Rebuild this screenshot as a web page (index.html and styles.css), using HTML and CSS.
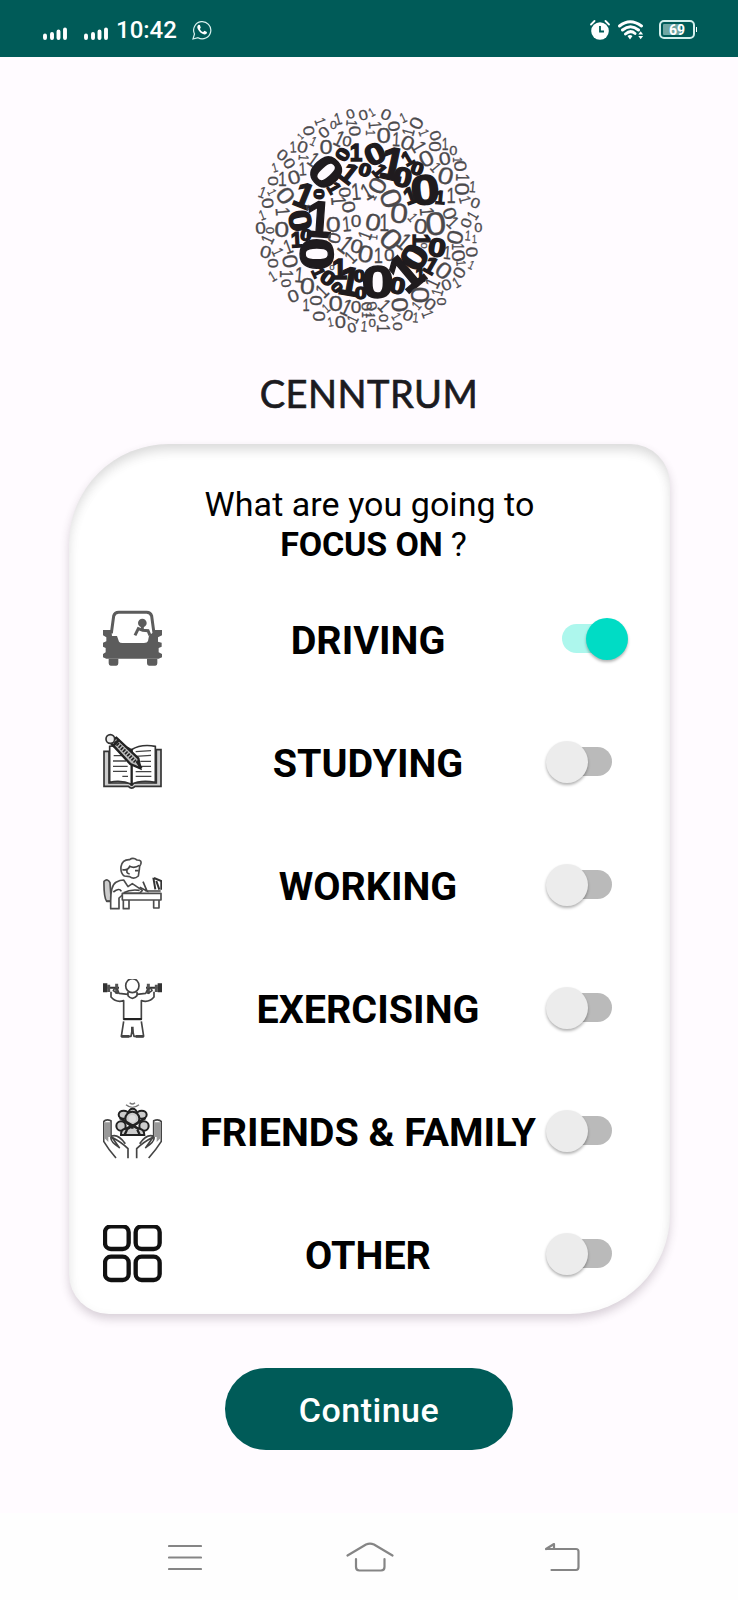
FILE: index.html
```html
<!DOCTYPE html>
<html lang="en">
<head>
<meta charset="utf-8">
<title>Cenntrum</title>
<link rel="stylesheet" href="styles.css">
</head>
<body>
<header class="status">
  <svg class="signal" viewBox="0 0 67 13" width="67" height="13"><path d="M2 8.500v2.500M9 7v4M15.500 4.500v6.500M22 2.500v8.500M43 8.500v2.500M50 7v4M56.500 4.500v6.500M63 2.500v8.500" fill="none" stroke="#fff" stroke-width="3.900" stroke-linecap="round"/></svg>
  <span class="clock">10:42</span>
  <svg class="chat" viewBox="0 0 20 20" width="20" height="20"><path d="M1 19l1.500-5A8.600 8.600 0 1 1 6 17.700z" fill="none" stroke="#d9f2ef" stroke-width="1.200"/><path d="M6.700 4.800c-1.500.8-1.800 2.500-.9 4.300 1.400 3 4 5 6.600 5.300 1.800 0 2.800-1.200 2.500-2.400l-2.400-1.200-1.300 1.300c-1.500-.6-2.700-1.800-3.300-3.200l.9-1.200-.9-2.600z" fill="#fff"/></svg>
  <span class="spacer"></span>
  <svg class="alarm" viewBox="0 0 20 20" width="20" height="20"><circle cx="10" cy="11" r="8.800" fill="#fff"/><path d="M1 4.500L4.500 1M19 4.500L15.500 1" stroke="#fff" stroke-width="1.800" stroke-linecap="round"/><path d="M10 6v5.500h4" fill="none" stroke="#005b58" stroke-width="1.800"/></svg>
  <svg class="wifi" viewBox="0 0 26 20" width="26" height="20"><path d="M1.500 6Q12 -2.500 23.500 6M4.500 10Q12.500 3.500 20.500 10M7.500 14Q12.500 9.500 17 13.500" fill="none" stroke="#fff" stroke-width="2.900" stroke-linecap="round"/><path d="M9.500 16Q12 14 14.500 16L12 19.500zM20.300 14.500l2.400-3.200 2.400 3.200zM20.300 16l2.400 3.200 2.400-3.200z" fill="#fff"/></svg>
  <span class="battery">69</span>
</header>

<main class="screen">
  <svg class="logo" id="logo" viewBox="0 0 717 717" width="239" height="239"></svg>
  <h1 class="brand">CENNTRUM</h1>

  <section class="card">
    <p class="question">What are you going to<br><span class="second"><b>FOCUS ON</b> ?</span></p>
    <div class="rows">
      <div class="row">
        <svg class="icon soft" viewBox="0 2 177 177"><path d="M25 72L32 20Q35 9 47 9H131Q143 9 146 20L153 72" fill="none" stroke="#5c5c5c" stroke-width="9"/><path d="M0 62h25l2 18h15l6 17q3 4 10 4h65q10 0 12-6l3-16 10-8h5l2-9h22v16l-12 6v13l11 3v12l-9 4v13l10 5v10l-10 4H10l-10-4v-10l8-5v-13l-8-4v-12l10-4V84L0 78z" fill="#5c5c5c"/><path d="M17 148h29v14q0 7-6 7H23q-6 0-6-7zM132 148h31v14q0 7-6 7h-19q-6 0-6-7z" fill="#5c5c5c"/><circle cx="118" cy="41" r="13" fill="#5c5c5c"/><path d="M118 48v15M96 78l10-20 13 5 16 1 6 14" fill="none" stroke="#5c5c5c" stroke-width="9"/></svg>
        <span class="label">DRIVING</span><span class="switch on"></span>
      </div>
      <div class="row">
        <svg class="icon soft" viewBox="0 0 177 177"><path d="M3 55H18V150H80Q86 163 92 150H160V50H174V160H96Q86 170 76 160H3z" fill="#ccc" stroke="#333" stroke-width="5"/><path d="M20 40Q60 32 85 50Q115 32 157 40V148Q112 140 86 154Q55 140 20 148z" fill="#fff" stroke="#333" stroke-width="5"/><path d="M86 48V158" stroke="#222" stroke-width="7"/><path d="M32 68h25M30 84h39M30 100h44M30 115h42M58 130h17M98 56l46-3M98 70l46-3M112 85h32M113 100h31M98 116h47M98 130h47" stroke="#444" stroke-width="4"/><path d="M20 26L40 14 106 76 112 106 82 93z" fill="#bbb" stroke="#222" stroke-width="7"/><path d="M36 26L97 86" stroke="#222" stroke-width="11" stroke-dasharray="5 4"/><path d="M28 41L49 20M101 84L115 106" stroke="#222" stroke-width="8"/><circle cx="22" cy="18" r="13" fill="#eee" stroke="#333" stroke-width="5"/></svg>
        <span class="label">STUDYING</span><span class="switch"></span>
      </div>
      <div class="row">
        <svg class="icon soft" viewBox="0 0 177 177"><g fill="#fff" stroke="#4c4c4c" stroke-width="5" stroke-linejoin="round"><path d="M3 76Q14 66 21 80L25 136H11Q2 124 3 76z" fill="#ccc"/><path d="M23 135Q23 88 39 79Q51 72 62 72L75 92L88 83L118 103L110 112H74L65 111L48 126V158H23V135H9"/><path d="M58 112H174V132H58zM61 132H78V158H61zM152 132H168V156H152z"/><path d="M64 60Q52 52 54 32Q58 10 80 11Q90 3 102 12Q118 12 113 25Q109 30 109 40L106 60Q93 72 80 62L64 60z"/></g><path d="M58 41Q75 44 80 31Q95 38 109 28M73 42Q68 52 80 54M96 44H107M62 110Q82 99 110 103M110 94L132 105L120 77M127 105H173" fill="none" stroke="#444" stroke-width="5"/><path d="M151 65L157 100M153 66L175 75V101M160 75L169 101" fill="none" stroke="#333" stroke-width="6"/><path d="M31 108Q49 94 55 106" fill="none" stroke="#444" stroke-width="5"/></svg>
        <span class="label">WORKING</span><span class="switch"></span>
      </div>
      <div class="row">
        <svg class="icon soft" viewBox="0 0 177 177"><path d="M0 13h13v27H0zM164 13h13v27h-13z" fill="#333"/><path d="M13 26H48M129 26H164" stroke="#333" stroke-width="6"/><path d="M17 17v22M41 14v30M136 14v30M160 17v22" stroke="#555" stroke-width="9"/><g fill="none" stroke="#444" stroke-width="5" stroke-linejoin="round"><ellipse cx="88" cy="20" rx="20" ry="21"/><path d="M75 39V50Q88 66 102 50V39M75 46L48 43L43 31Q34 24 31 35L44 44M102 46L128 43L134 31Q145 24 147 35L134 44M24 38V54Q40 72 62 65V121H115V65Q138 72 153 54V38M62 127L55 172H84L88 150L93 172H122L115 127"/></g><path d="M62 120H116" stroke="#222" stroke-width="6"/><path d="M88 143V160M55 172H79M98 172H122" stroke="#444" stroke-width="8"/></svg>
        <span class="label">EXERCISING</span><span class="switch"></span>
      </div>
      <div class="row">
        <svg class="icon soft" viewBox="0 0 177 177"><g stroke="#444" stroke-width="5" stroke-linejoin="round"><path d="M1 60Q8 50 24 56V104Q57 121 75 140V169M2 58V118Q16 142 39 168M26 104L49 137Q18 117 25 103Q44 94 67 125M176 60Q168 50 152 56V104Q119 121 101 140V169M175 58V118Q160 142 137 168M151 104L128 137Q159 117 152 103Q132 94 110 125" fill="none"/><path d="M4 61h18v44h-6v15L4 108zM155 61h18v47l-12 12v-15h-6z" fill="#999" stroke="none"/></g><g fill="#ccc" stroke="#222" stroke-width="6"><ellipse cx="62" cy="38" rx="15" ry="12"/><ellipse cx="116" cy="38" rx="15" ry="12"/><circle cx="54" cy="72" r="14"/><circle cx="123" cy="72" r="14"/><circle cx="89" cy="32" r="12"/><circle cx="88" cy="50" r="21"/><path d="M54 99Q53 82 67 80L88 71L109 80Q124 82 124 99z"/></g><path d="M50 48L108 82M128 48L68 84M65 98L72 83M103 83L111 100M88 66V80" stroke="#222" stroke-width="7"/><circle cx="88" cy="50" r="11" fill="#ddd"/><path d="M69 8Q88 24 108 8M80 2Q88 10 96 2" stroke="#777" stroke-width="4" fill="none"/></svg>
        <span class="label">FRIENDS &amp; FAMILY</span><span class="switch"></span>
      </div>
      <div class="row">
        <svg class="icon soft" viewBox="0 2 177 177"><g fill="none" stroke="#111" stroke-width="13"><rect x="6" y="6" width="71" height="68" rx="18"/><rect x="98" y="6" width="72" height="68" rx="18"/><rect x="6" y="97" width="71" height="70" rx="18"/><rect x="98" y="97" width="72" height="70" rx="18"/></g></svg>
        <span class="label">OTHER</span><span class="switch"></span>
      </div>
    </div>
  </section>

  <button class="continue">Continue</button>
</main>

<nav class="nav">
  <svg viewBox="0 0 34 27" width="34" height="27"><path d="M1 2H33M1 13.500H33M1 25H33" class="stroke"/></svg>
  <svg viewBox="0 0 48 31" width="48" height="31"><path d="M1.500 13.500L20 2.500Q24 .8 28 2.500L46.500 13.500M10 17V25Q10 28.500 13.500 28.500H35Q38.500 28.500 38.500 25V17" class="stroke"/></svg>
  <svg viewBox="0 0 35 29" width="35" height="29"><path d="M1 6L9 1V6M1 6H31Q33.500 6 33.500 8.500V24Q33.500 27 31 27H6.500" class="stroke"/></svg>
</nav>
<script src="logo.js"></script>
</body>
</html>
```
FILE: styles.css
```css
* { box-sizing: border-box; }
body {
  margin: 0;
  width: 738px;
  height: 1600px;
  display: flex;
  flex-direction: column;
  background: #fffbff;
  font-family: Roboto, "Liberation Sans", sans-serif;
  color: #000;
}
.status {
  height: 57px;
  flex: none;
  display: flex;
  align-items: center;
  padding: 2px 43px 0 43px;
  background: #005b58;
  color: #fff;
}
.signal { margin-top: 7px; }
.clock { margin-left: 6px; font-size: 24px; font-weight: 500; line-height: 28px; width: 60px; white-space: nowrap; }
.chat { margin-left: 16px; }
.spacer { flex: 1; }
.wifi { margin: 1px 15px 0 8px; }
.battery {
  position: relative;
  width: 36px;
  height: 19px;
  border: 2px solid #d4efec;
  border-radius: 5px;
  background: linear-gradient(90deg, #6fa6a2 65%, #005b58 65%) content-box;
  padding: 2px;
  font-size: 14px;
  font-weight: 700;
  line-height: 12px;
  text-align: center;
}
.battery::after {
  content: "";
  position: absolute;
  right: -4px;
  top: 5px;
  width: 1px;
  height: 5px;
  background: #fff;
}
.screen { display: flex; flex-direction: column; align-items: center; flex: 1; }
.logo { margin-top: 43px; display: block; }
.logo text {
  font-family: "Liberation Sans", sans-serif;
  text-anchor: middle;
  fill: #4b494c;
  stroke: #4b494c;
  stroke-width: .8px;
}
.logo .heavy { fill: #1f1b1e; stroke: #1f1b1e; stroke-width: 4px; }
.brand {
  margin: 30px 0 0;
  height: 48px;
  font: 400 38px/48px Lato, sans-serif;
  letter-spacing: .5px;
  color: #1c1b1f;
  -webkit-text-stroke: .7px #1c1b1f;
}
.card {
  width: 601px;
  height: 870px;
  margin-top: 27px;
  margin-left: 1px;
  padding-top: 40px;
  border-radius: 100px 40px 100px 40px;
  background: #fff;
  box-shadow: 0 5px 10px rgba(60, 40, 60, .2), inset 0 9px 14px -4px rgba(0, 0, 0, .09), inset 0 5px 12px rgba(0, 0, 0, .08);
}
.question { margin: 0 0 16px; font-size: 34px; line-height: 40px; letter-spacing: .05px; text-align: center; }
.second { padding-left: 8px; letter-spacing: -.15px; }
.rows { display: flex; flex-direction: column; gap: 5px; }
.row {
  height: 118px;
  display: grid;
  grid-template-columns: 59px 1fr 82px;
  align-items: center;
  padding: 0 42px 0 34px;
}
.icon { width: 59px; height: 59px; overflow: hidden; }
.soft { filter: blur(.5px); }
.label { margin-left: 28px; padding-top: 2px; text-align: center; font-size: 39.5px; font-weight: 700; white-space: nowrap; }
.switch { position: relative; height: 42px; }
.switch::before, .switch::after { content: ""; position: absolute; }
.switch::before { left: 10px; top: 6px; width: 56px; height: 29px; border-radius: 15px; background: #bababa; }
.switch::after { left: 0; top: 0; width: 42px; height: 42px; border-radius: 50%; background: #ececec; box-shadow: 0 2px 3px rgba(0, 0, 0, .3); }
.switch.on::before { left: 16px; background: #adf7ed; }
.switch.on::after { left: 40px; background: #00dcc5; }
.continue {
  width: 288px;
  height: 82px;
  margin-top: 54px;
  padding: 1px 0 0;
  border: 0;
  border-radius: 41px;
  background: #005b58;
  color: #fff;
  font: 500 34px Roboto, sans-serif;
  letter-spacing: .5px;
}
.nav {
  height: 87px;
  flex: none;
  display: grid;
  grid-template-columns: 34px 48px 35px;
  column-gap: 144px;
  padding: 1px 0 0 168px;
  align-items: center;
  background: #fefefe;
}
.nav svg:last-child { margin-left: 7px; }
.stroke { fill: none; stroke: #858585; stroke-width: 2.2; stroke-linecap: round; stroke-linejoin: round; }
```
FILE: logo.js
```js
// Digit cloud: each entry is "digit x y height rotation [h]"; h marks the heavy digits of the C.
const quadrants = [
  [0, 0, `0 301 42 27 -20;0 340 45 30 -15;1 211 64 32 70;1 264 57 36 -15;0 250 77 22 0;1 305 69 32 95;0 176 92 32 80;0 222 97 32 -40;1 268 116 48 25;0 314 93 34 85;1 151 109 20 -45;1 190 124 28 25;1 129 141 34 -3;0 158 141 34 15;0 228 142 42 0;0 291 124 30 10;0 278 163 38 -60 h;1 318 158 50 0 h;0 97 165 32 35;1 161 173 30 95;0 118 190 32 60;1 190 178 44 35;1 74 203 28 -15;0 228 216 92 48 h;1 298 220 60 38 h;0 345 210 38 15 h;1 97 235 44 0;1 158 207 40 -3;0 132 232 40 -15;0 69 243 32 90;1 252 264 38 60 h;1 66 277 26 65;1 37 277 34 20;0 106 287 50 55;1 162 287 75 22 h;0 208 282 32 90 h;0 284 277 34 85;1 318 275 50 -5;1 350 275 50 -30;0 53 310 34 80;1 266 302 44 85;0 296 321 38 80;1 98 335 42 85;0 175 323 14 0;1 36 345 30 -20;1 207 358 108 4 h;0 150 362 65 80 h`],
  [357, 0, `1 8 37 26 -30;0 51 44 32 25;1 102 53 30 -25;0 142 70 38 -65;0 75 79 34 80;1 18 75 38 85;1 118 96 36 -75;1 165 98 30 70;0 199 107 32 70;0 44 106 46 0;1 82 118 42 3;0 116 129 42 25;1 150 140 44 60;1 228 132 34 0;0 198 140 34 90;0 253 153 26 0;1 5 98 28 90;0 18 162 62 -25 h;1 70 192 98 12 h;1 116 175 42 -30 h;0 172 176 46 -25;0 227 176 38 -10;1 266 179 28 90;0 274 198 36 85;1 200 202 34 50;0 145 206 38 20 h;0 101 232 58 10 h;1 32 213 42 50 h;0 230 228 50 15;1 281 232 40 92;0 280 267 42 90;1 311 260 34 5;1 124 287 50 -20 h;0 168 270 88 -5 h;1 213 292 40 5 h;1 246 287 46 0;0 26 257 50 -60;0 66 295 60 70;1 288 299 34 75;0 319 309 30 20;1 8 290 28 -60;1 174 335 42 85;0 242 340 38 70;1 311 347 34 -60;1 131 352 30 50;0 90 340 58 5`],
  [0, 357, `0 32 27 34 -5;0 58 34 22 90;0 95 29 48 0;0 250 15 48 0;1 290 15 45 -5;0 318 8 34 0;1 52 61 38 -65;1 140 62 46 -3 h;0 168 48 34 10 h;0 253 57 36 -75;1 287 76 56 38;0 320 82 40 15;1 345 49 40 -70;0 47 99 36 15;1 83 99 34 65;1 114 83 42 -20;0 199 105 100 90 h;1 301 115 40 -45;0 347 105 50 10;0 120 127 44 80;0 69 133 32 90;1 269 150 62 0 h;0 246 146 16 0;1 67 172 32 -30;1 109 165 40 90;1 148 168 46 5;1 205 160 36 65 h;0 234 177 42 35 h;1 298 187 85 10 h;0 328 172 34 0 h;0 332 222 36 0 h;0 108 193 28 80;0 172 201 48 5;0 261 205 30 50 h;1 216 216 44 -45;0 130 231 36 -20;1 168 257 36 0;0 196 245 34 90;0 257 252 46 0;1 289 265 50 25;0 318 265 34 0;1 228 268 28 -40;0 205 292 34 90;1 241 309 28 -10;0 271 308 36 0;1 308 300 34 -65;0 305 326 28 -15;1 342 322 32 5;1 350 287 30 90;0 350 262 30 80`],
  [357, 357, `0 12 10 50 10;1 46 10 50 0;0 155 22 44 5;0 200 14 68 -5;1 251 10 40 45;0 292 12 30 -70;0 328 27 26 0;1 12 55 26 -85;0 66 61 62 45;1 105 67 52 40;1 158 62 50 90 h;0 258 55 46 -75;1 297 50 30 5;1 316 61 24 0;0 204 86 54 10 h;0 166 80 20 90;0 136 114 74 -60 h;1 235 101 40 5;1 267 83 34 90;0 308 99 34 85;0 268 110 38 80;1 28 108 46 0;0 61 110 34 0;1 110 160 112 -40 h;1 186 140 50 30 h;0 224 155 48 35;1 276 132 28 85;0 271 161 34 -60;1 307 138 26 25;1 154 168 38 0 h;1 190 192 44 -65;0 232 198 32 -20;1 262 191 32 -30;0 85 200 48 10 h;0 152 228 54 90;1 205 220 34 -75;0 218 248 26 90;0 183 256 34 35;1 142 260 30 -50;0 92 257 48 85;1 46 260 42 45;1 176 285 34 70;0 117 289 32 25;1 140 296 30 5;1 82 292 28 60;0 43 297 26 90;0 85 322 28 90;1 42 328 38 90;0 10 312 24 0;1 5 290 26 90;0 8 262 30 70;0 26 190 98 0 h`]
];
const logo = document.getElementById("logo");
for (const [ox, oy, list] of quadrants) {
  for (const entry of list.split(";")) {
    const [digit, x, y, h, rot, heavy] = entry.split(" ");
    const t = document.createElementNS("http://www.w3.org/2000/svg", "text");
    t.textContent = digit;
    t.setAttribute("font-size", h / 0.7);
    t.setAttribute("y", h * 0.49);
    const stretch = digit === "1" ? (heavy ? 0.95 : 0.75) : (heavy ? 1.25 : 1.18);
    t.setAttribute("transform", `translate(${+x + ox} ${+y + oy}) rotate(${rot}) scale(${stretch} 1)`);
    t.setAttribute("font-weight", heavy ? 700 : 400);
    if (heavy) t.setAttribute("class", "heavy");
    logo.appendChild(t);
  }
}
```
